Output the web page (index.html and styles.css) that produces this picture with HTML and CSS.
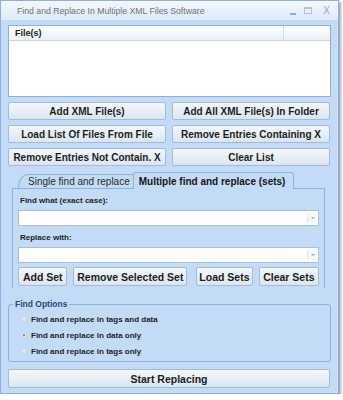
FILE: index.html
```html
<!DOCTYPE html>
<html>
<head>
<meta charset="utf-8">
<link rel="stylesheet" href="styles.css">
</head>
<body>
<div class="window">
  <div class="titlebar">
    <span class="title">Find and Replace In Multiple XML Files Software</span>
    <div class="controls">
      <span class="ctl min"></span>
      <span class="ctl max"></span>
      <span class="ctl close">X</span>
    </div>
  </div>
  <div class="body">
    <div class="listbox">
      <div class="lv-header">
        <div class="col1">File(s)</div>
        <div class="col2"></div>
      </div>
    </div>
    <div class="btn-grid">
      <button class="btn">Add XML File(s)</button>
      <button class="btn">Add All XML File(s) In Folder</button>
      <button class="btn">Load List Of Files From File</button>
      <button class="btn">Remove Entries Containing X</button>
      <button class="btn">Remove Entries Not Contain. X</button>
      <button class="btn">Clear List</button>
    </div>
    <div class="tabs">
      <div class="tab-strip">
        <div class="tab inactive">Single find and replace</div>
        <div class="tab active">Multiple find and replace (sets)</div>
      </div>
      <div class="tab-panel">
        <div class="label">Find what (exact case):</div>
        <div class="combo"><span class="arrow"></span></div>
        <div class="label">Replace with:</div>
        <div class="combo"><span class="arrow"></span></div>
        <div class="set-buttons">
          <button class="btn sbtn w-add">Add Set</button>
          <button class="btn sbtn w-rem">Remove Selected Set</button>
          <button class="btn sbtn w-load">Load Sets</button>
          <button class="btn sbtn w-clear">Clear Sets</button>
        </div>
      </div>
    </div>
    <div class="options">
      <div class="legend">Find Options</div>
      <div class="radio"><span class="dot"></span>Find and replace in tags and data</div>
      <div class="radio"><span class="dot on"></span>Find and replace in data only</div>
      <div class="radio"><span class="dot"></span>Find and replace in tags only</div>
    </div>
    <button class="btn start">Start Replacing</button>
  </div>
</div>
</body>
</html>
```
FILE: styles.css
```css
* { box-sizing: border-box; }
html, body { margin: 0; padding: 0; background: #ffffff; }
body { font-family: "Liberation Sans", Arial, sans-serif; }

.window {
  width: 339px;
  height: 394px;
  background: #c4dbf7;
  border: 1px solid #8fb0dc;
  box-shadow: 2px 2px 2px rgba(90, 100, 120, 0.55);
  display: flex;
  flex-direction: column;
}

.titlebar {
  height: 20px;
  background: linear-gradient(#f5f9fe, #dce9fa);
  display: flex;
  align-items: center;
  padding: 0 0 0 16px;
  border-bottom: 1px solid #c3d8f3;
}
.title {
  font-size: 8.7px;
  color: #6e737b;
  flex: 1;
  padding-top: 1px;
}
.controls { display: flex; align-items: center; gap: 8px; padding-right: 8px; }
.ctl { display: block; width: 9px; height: 9px; }
.ctl.min { border-bottom: 2px solid #9aabc0; height: 6px; width: 6px; margin-top: 2px; }
.ctl.max { border: 1px solid #b3c2d4; border-top-width: 2px; width: 8px; height: 7px; }
.ctl.close { font-size: 10px; color: #98a6b8; line-height: 9px; width: auto; margin-left: 3px; }

.body {
  flex: 1;
  padding: 4px 7px 0 7px;
  display: flex;
  flex-direction: column;
}

.listbox {
  height: 72px;
  background: #ffffff;
  border: 1px solid #8eb0da;
}
.lv-header {
  display: flex;
  height: 15px;
  background: linear-gradient(#ffffff, #e9f0f9);
  border-bottom: 1px solid #c7d6ea;
}
.col1 {
  width: 275px;
  border-right: 1px solid #d2dcea;
  font-size: 9px;
  font-weight: bold;
  color: #1d1d1d;
  padding: 2px 0 0 6px;
}
.col2 { flex: 1; }

.btn {
  font-family: "Liberation Sans", Arial, sans-serif;
  font-weight: bold;
  font-size: 10px;
  color: #1c1c1c;
  background: linear-gradient(#f4f7fb 0%, #e8eff8 50%, #dae5f2 100%);
  border: 1px solid #a4bad6;
  border-radius: 2px;
  padding: 0;
  margin: 0;
  height: 18px;
  white-space: nowrap;
}

.btn-grid {
  margin-top: 5px;
  display: grid;
  grid-template-columns: 158px 158px;
  column-gap: 6px;
  row-gap: 5px;
}

.tabs { margin-top: 5px; padding: 0 6px 0 4px; }
.tab-strip {
  display: flex;
  align-items: flex-end;
  height: 17px;
  padding-left: 6px;
}
.tab {
  font-size: 10px;
  height: 14px;
  line-height: 13px;
  border: 1px solid #8eb0da;
  border-bottom: none;
  border-radius: 3px 3px 0 0;
  padding: 0 4px 0 6px;
  color: #2a2a2a;
}
.tab.inactive {
  background: #c4dbf7;
  border-top-left-radius: 10px 14px;
  padding-left: 9px;
}
.tab.active {
  height: 17px;
  line-height: 17px;
  font-weight: bold;
  background: #c4dbf7;
  margin-left: -2px;
  margin-bottom: -1px;
  position: relative;
  z-index: 1;
  padding: 0 8px 0 5px;
  color: #141414;
}
.tab-panel {
  border: 1px solid #8eb0da;
  border-bottom: none;
  padding: 3px 5px 0 5px;
  height: 100px;
}
.label {
  font-size: 8px;
  font-weight: bold;
  color: #1d1d1d;
  height: 11px;
  line-height: 11px;
  padding-left: 2px;
  margin-top: 3px;
}
.combo {
  margin-top: 4px;
  height: 16px;
  background: #ffffff;
  border: 1px solid #a9c0dc;
  position: relative;
}
.combo + .label { margin-top: 6px; }
.arrow {
  position: absolute;
  right: 2px;
  top: 2px;
  width: 9px;
  height: 10px;
  background: #f3f6fa;
  border-left: 1px solid #e0e7f0;
}
.arrow::after {
  content: "";
  position: absolute;
  left: 3px;
  top: 4px;
  border-left: 2px solid transparent;
  border-right: 2px solid transparent;
  border-top: 2px solid #9aa4b2;
}
.set-buttons {
  margin-top: 4px;
  display: flex;
  gap: 6px;
}
.sbtn { font-size: 10.5px; height: 19px; }
.w-add { width: 50px; }
.w-rem { width: 115px; }
.w-load { width: 57px; margin-left: 3px; }
.w-clear { width: 61px; }

.options {
  margin-top: 16px;
  border: 1px solid #8eb0da;
  border-radius: 3px;
  height: 58px;
  position: relative;
  padding: 6px 0 0 12px;
}
.legend {
  position: absolute;
  top: -6px;
  left: 4px;
  padding: 0 2px;
  background: #c4dbf7;
  font-size: 8.5px;
  font-weight: bold;
  color: #27457e;
  line-height: 11px;
}
.radio {
  display: flex;
  align-items: center;
  font-size: 8px;
  font-weight: bold;
  color: #1d1d1d;
  height: 16px;
}
.dot {
  width: 6px;
  height: 6px;
  border-radius: 50%;
  background: #dfe9f6;
  border: 1px solid #c9d7ea;
  margin-right: 4px;
  position: relative;
}
.dot.on::after {
  content: "";
  position: absolute;
  left: 1px; top: 1px;
  width: 2px; height: 2px;
  border-radius: 50%;
  background: #5f6b7d;
}
.start {
  margin-top: 7px;
  height: 19px;
  width: 322px;
  font-size: 10.5px;
}
```
